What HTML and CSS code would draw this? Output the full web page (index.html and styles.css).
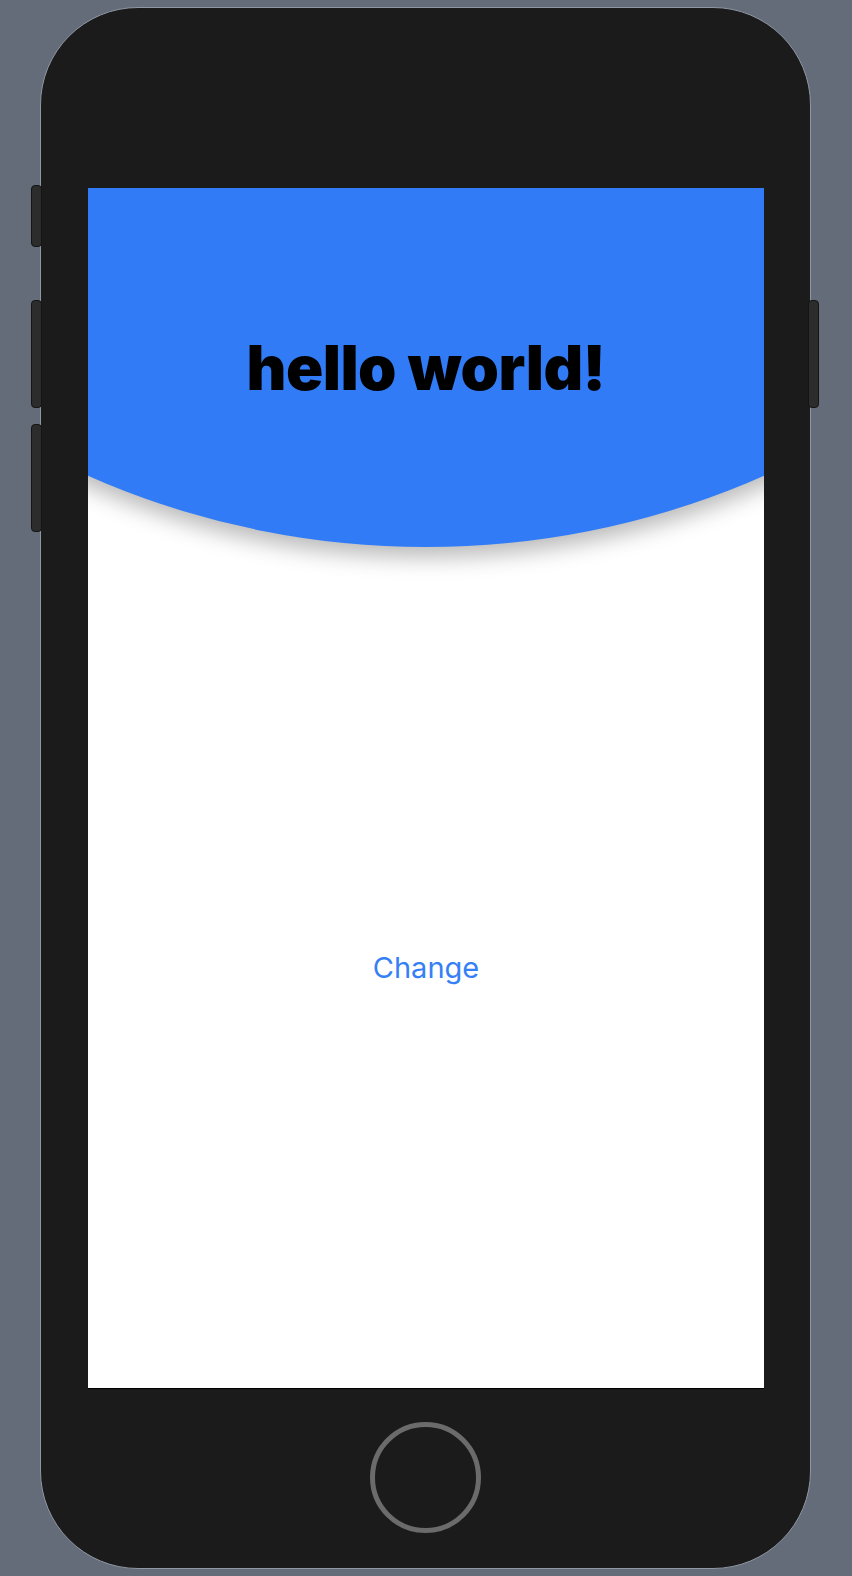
FILE: index.html
```html
<!DOCTYPE html>
<html>
<head>
<meta charset="utf-8">
<link rel="stylesheet" href="styles.css">
</head>
<body>
<div class="device">
  <div class="side-btn side-left b1"></div>
  <div class="side-btn side-left b2"></div>
  <div class="side-btn side-left b3"></div>
  <div class="side-btn side-right b4"></div>
  <div class="phone">
    <div class="screen">
      <div class="header-wrap">
        <div class="curve">
          <div class="title-area">
            <h1 class="title">hello world!</h1>
          </div>
        </div>
      </div>
      <div class="content">
        <button class="change-btn">Change</button>
      </div>
    </div>
    <div class="home-btn"></div>
  </div>
</div>
</body>
</html>
```

FILE: styles.css
```css
html, body {
  margin: 0;
  padding: 0;
}
body {
  background: #636c78;
  width: 852px;
  height: 1576px;
  overflow: hidden;
}
.device {
  position: relative;
  margin-left: 40px;
  margin-top: 7px;
  width: 771px;
  height: 1562px;
}
.phone {
  position: relative;
  z-index: 1;
  box-sizing: border-box;
  width: 771px;
  height: 1562px;
  background: #1b1b1b;
  border: 1px solid #8e97a2;
  border-radius: 98px;
  padding-top: 180px;
  display: flex;
  flex-direction: column;
  align-items: center;
}
.side-btn {
  position: absolute;
  z-index: 2;
  box-sizing: border-box;
  width: 11px;
  background: #2c2c2c;
  border: 1px solid #141414;
  border-radius: 4px;
}
.side-left { left: -9px; }
.side-right { left: 768px; width: 11px; }
.b1 { top: 178px; height: 62px; }
.b2 { top: 293px; height: 108px; }
.b3 { top: 417px; height: 108px; }
.b4 { top: 293px; height: 108px; }

.screen {
  width: 676px;
  height: 1200px;
  margin-left: 1px;
  background: #ffffff;
  overflow: hidden;
  display: flex;
  flex-direction: column;
  box-shadow: 0 1px 0 #000;
}
.header-wrap {
  height: 359px;
  flex-shrink: 0;
  display: flex;
  justify-content: center;
  align-items: flex-end;
}
.curve {
  flex-shrink: 0;
  width: 1676px;
  height: 1676px;
  border-radius: 50%;
  background: #317cf6;
  box-shadow: 0 10px 22px rgba(0, 0, 0, 0.28);
  display: flex;
  flex-direction: column;
  justify-content: flex-end;
  align-items: center;
}
.title-area {
  height: 359px;
  display: flex;
  align-items: center;
  justify-content: center;
}
.title {
  margin: 0;
  font-family: "Inter", "Liberation Sans", sans-serif;
  font-weight: 900;
  font-size: 61.5px;
  letter-spacing: -0.5px;
  color: #000;
  line-height: 1;
}
.content {
  flex: 1;
  display: flex;
  align-items: center;
  justify-content: center;
}
.change-btn {
  background: none;
  border: none;
  padding: 0;
  font-family: "Inter", "Liberation Sans", sans-serif;
  font-weight: 400;
  font-size: 29px;
  color: #3580f6;
  line-height: 1;
}
.home-btn {
  margin-top: 34px;
  box-sizing: border-box;
  width: 111px;
  height: 111px;
  border-radius: 50%;
  border: 5px solid #6b6b6b;
}
```
